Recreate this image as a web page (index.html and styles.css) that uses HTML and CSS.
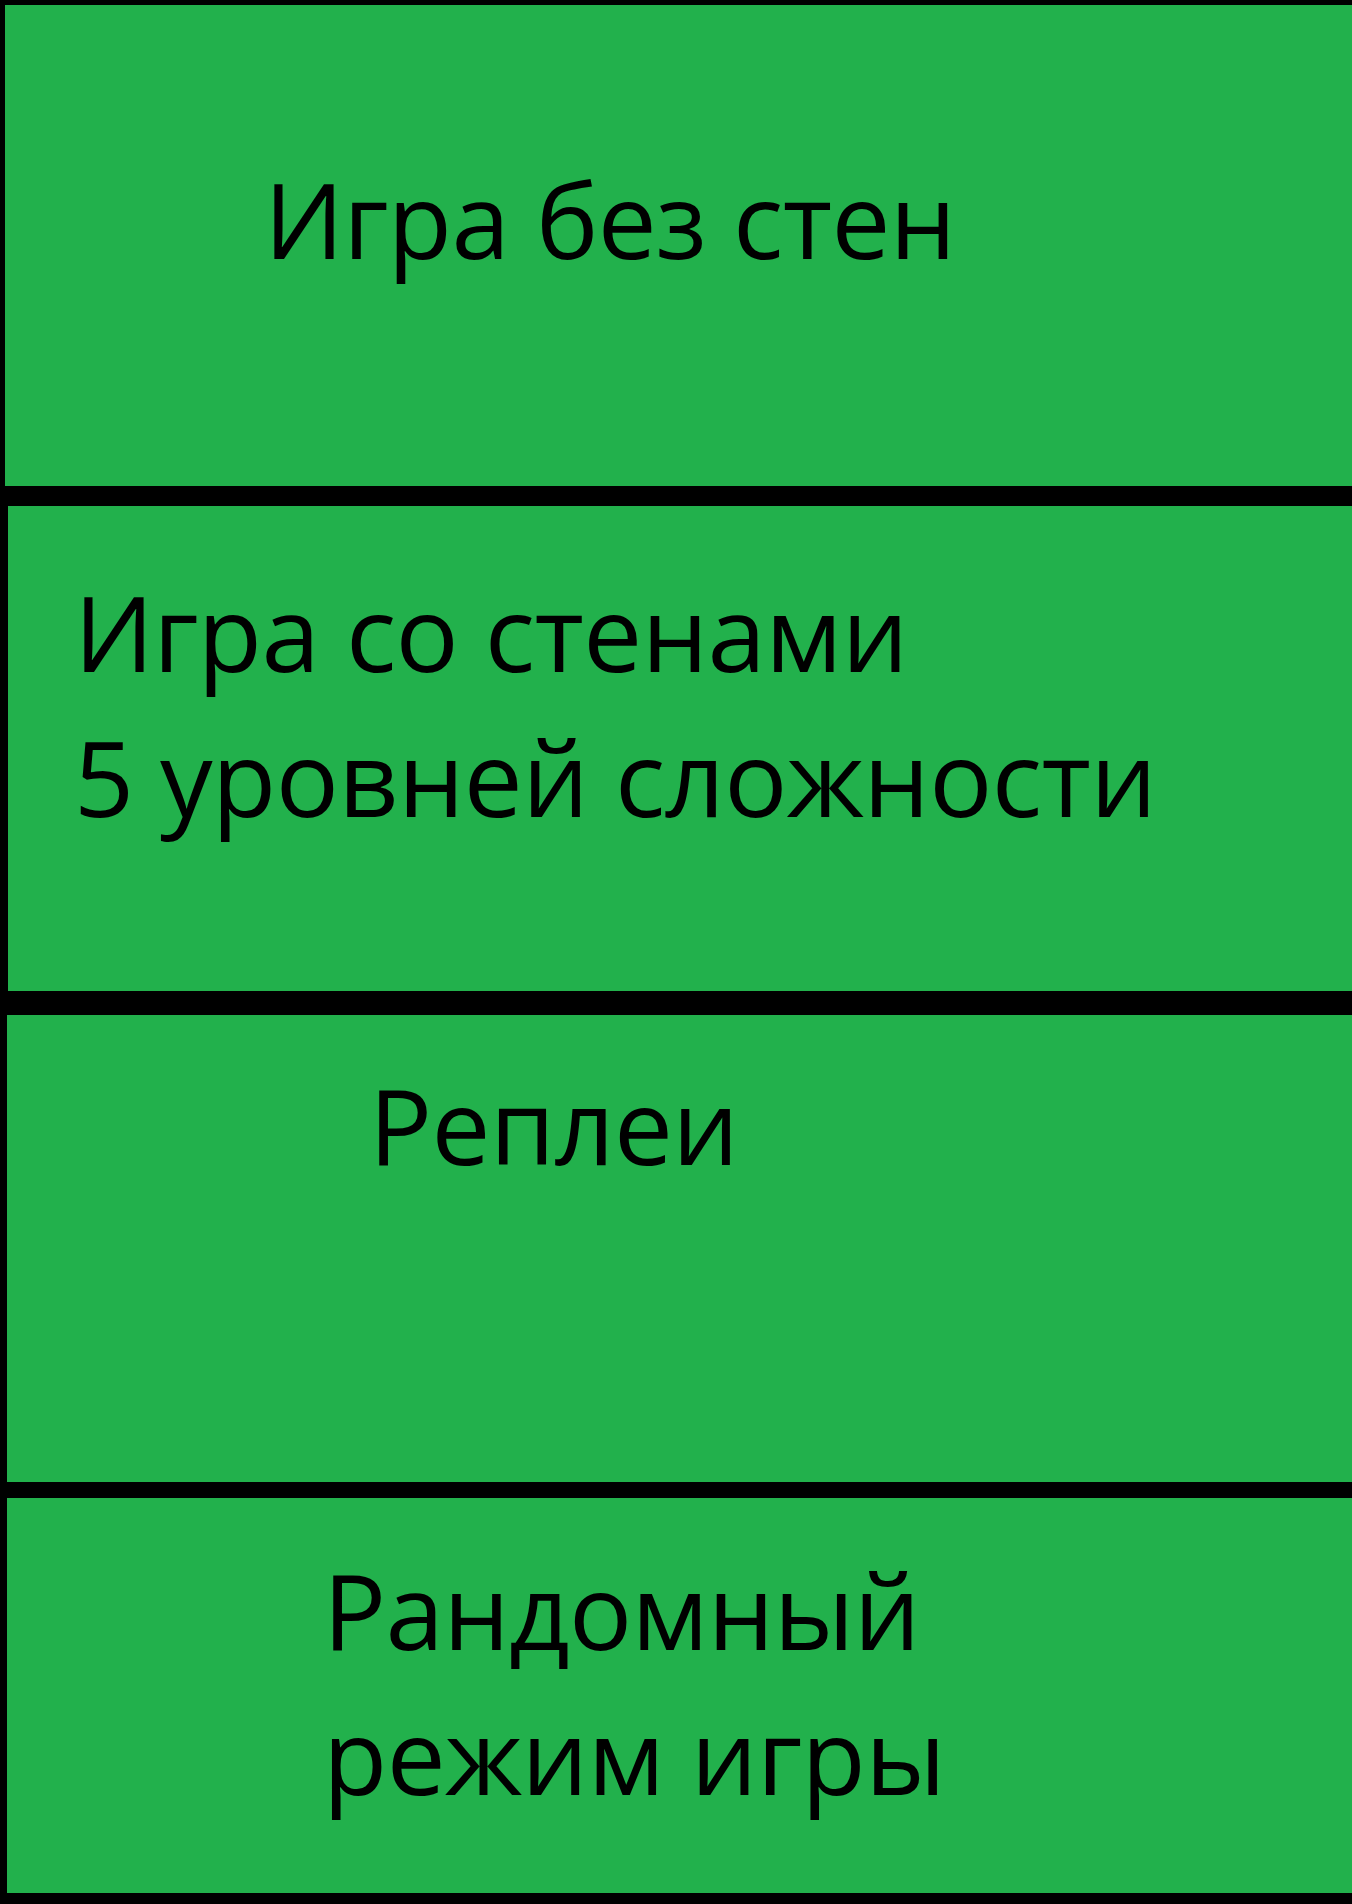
FILE: index.html
```html
<!DOCTYPE html>
<html lang="ru">
<head>
<meta charset="utf-8">
<title>Меню</title>
<link rel="stylesheet" href="styles.css">
</head>
<body>
<main class="menu">
  <section class="item item-nowalls"><p class="label">Игра без стен</p></section>
  <section class="item item-walls"><p class="label">Игра со стенами<br>5 уровней сложности</p></section>
  <section class="item item-replays"><p class="label">Реплеи</p></section>
  <section class="item item-random"><p class="label">Рандомный<br>режим игры</p></section>
</main>
</body>
</html>
```

FILE: styles.css
```css
html, body {
  margin: 0;
  padding: 0;
  background: #000;
}
.menu {
  display: flex;
  flex-direction: column;
  width: 1352px;
  height: 1904px;
  box-sizing: border-box;
  background: #000;
}
.item {
  background: #22b14c;
  box-sizing: content-box;
  border-left: 7px solid #000;
  margin: 0;
}
.label {
  margin: 0;
  font-family: "Open Sans", "Noto Sans", sans-serif;
  font-size: 105px;
  line-height: 145px;
  letter-spacing: -0.6px;
  color: #000;
  white-space: nowrap;
}
.item-nowalls {
  height: 340px;
  border-top: 5px solid #000;
  border-left-width: 5px;
  padding: 141px 0 0 259px;
}
.item-walls {
  height: 432px;
  border-top: 20px solid #000;
  border-left-width: 8px;
  padding: 53px 0 0 66px;
}
.item-replays {
  height: 431px;
  border-top: 24px solid #000;
  padding: 37px 0 0 362px;
}
.item-random {
  height: 356px;
  border-top: 16px solid #000;
  border-bottom: 11px solid #000;
  padding: 39px 0 0 316px;
}
```
